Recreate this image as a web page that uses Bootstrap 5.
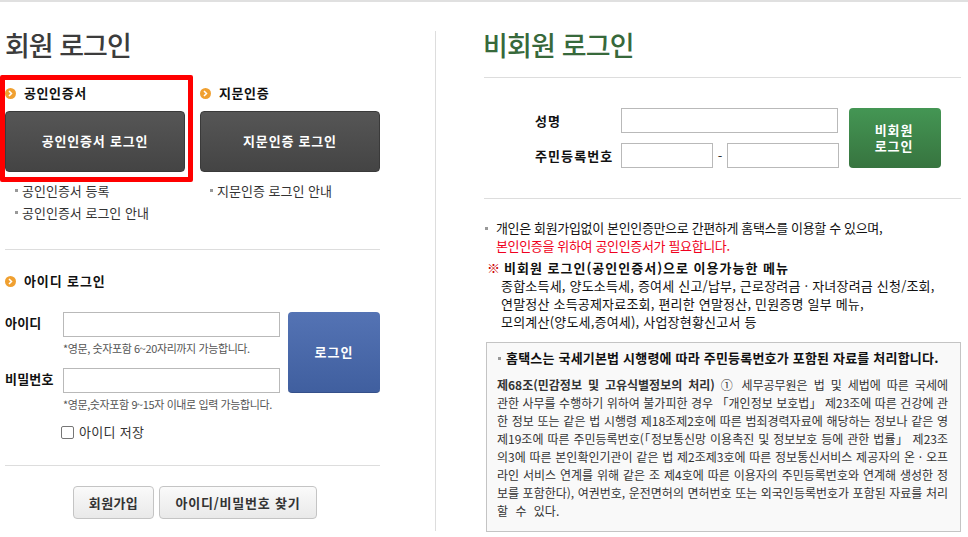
<!DOCTYPE html>
<html lang="ko">
<head>
    <meta charset="UTF-8">
    <meta name="viewport" content="width=device-width, initial-scale=1.0">
    <title>로그인</title>
    <link href="https://cdn.jsdelivr.net/npm/bootstrap@5.3.0/dist/css/bootstrap.min.css" rel="stylesheet">
    <script src="https://cdn.jsdelivr.net/npm/bootstrap@5.3.0/dist/js/bootstrap.bundle.min.js"></script>
    <style>
        body {
            font-family: "Noto Sans CJK KR", "Liberation Sans", sans-serif;
            font-size: 13px;
            line-height: 18px;
            color: #333;
            background: #fff;
            overflow: hidden;
        }
        .page-wrap { border-top: 2px solid #e0e0e0; height: 537px; position: relative; }
        .left-col { width: 375px; margin-left: 5px; padding-top: 25px; }
        .right-col { width: 477px; margin-left: 48px; padding-top: 25px; }
        .divider { width: 1px; background: #ddd; height: 500px; margin: 29px 0 0 55px; }
        .page-title { font-size: 27px; line-height: 36px; font-weight: 500; letter-spacing: -1px; color: #3c3c3c; margin: 0; }
        .title-green { color: #37693b; margin-left: -1px; letter-spacing: -.85px; }
        .sec-title { font-weight: 700; color: #111; line-height: 14px; letter-spacing: .6px; gap: 8px; }
        .dot { width: 11px; height: 11px; flex: none; display: block; }
        .red-box { position: absolute; left: 0; top: 73px; width: 193px; height: 107px; border: 5px solid #f00; border-radius: 2px; }
        .cert-row { margin-top: 23px; gap: 15px; }
        .cert-col { width: 180px; }
        .dark-btn {
            height: 61px; width: 180px; margin-top: 11px; border: 1px solid #3a3a3a; border-radius: 4px; display: block; padding-bottom: 3px;
            background: linear-gradient(#565656, #444); color: #fff; font-weight: 700; letter-spacing: .8px;
        }
        .bullets { list-style: none; padding: 0; margin: 8px 0 0 10px; color: #333; }
        .bullets li { line-height: 22px; padding-left: 7px; position: relative; }
        .bullets li::before { content: ""; position: absolute; left: 0; top: 9px; width: 3px; height: 3px; background: #999; }
        .rule { border-top: 1px solid #ddd; }
        .rule-cert { margin-top: 25px; }
        .sec-id { margin-top: 24px; letter-spacing: .9px; }
        .id-form { margin-top: 24px; }
        .txt-input { width: 100%; height: 25px; border: 1px solid #b9b9b9; background: #fff; display: block; outline: 0; }
        .id-label { width: 58px; font-weight: 700; color: #111; line-height: 22px; letter-spacing: .2px; flex: none; }
        .id-fields { width: 217px; flex: none; }
        .hint { font-size: 11px; line-height: 14px; color: #555; letter-spacing: -.4px; margin: 4px 0 13px; white-space: nowrap; }
        .blue-btn {
            width: 92px; height: 81px; border: 0; border-bottom: 1px solid #35508a; border-radius: 4px; margin-left: 8px;
            background: linear-gradient(#5473b4, #405f9f); color: #fff; font-weight: 700; letter-spacing: 1px;
        }
        .save-row { padding-left: 56px; gap: 5px; line-height: 16px; color: #333; letter-spacing: .3px; }
        .save-check { width: 13px; height: 13px; border: 1px solid #767676; border-radius: 2px; flex: none; margin: 0; appearance: none; background: #fff; }
        .rule-save { margin-top: 25px; }
        .btn-row { margin-top: 20px; padding-left: 5px; gap: 5px; }
        .gray-btn {
            height: 33px; border: 1px solid #c4c4c4; border-radius: 4px; background: linear-gradient(#fafafa, #e9e9e9);
            color: #333; font-weight: 700; letter-spacing: .4px; padding: 0;
        }
        .gray-join { width: 81px; }
        .gray-find { width: 158px; letter-spacing: .8px; }
        .rule-title { margin-top: 14px; }
        .guest-form { margin-top: 30px; }
        .guest-row { margin-bottom: 10px; }
        .guest-row:last-child { margin-bottom: 0; }
        .nm-label { width: 137px; padding-left: 51px; font-weight: 700; color: #111; line-height: 25px; letter-spacing: 1.1px; flex: none; white-space: nowrap; }
        .in-name { width: 217px; }
        .in-front { width: 92px; }
        .in-back { width: 112px; }
        .dash { width: 14px; text-align: center; color: #333; }
        .green-btn {
            width: 92px; height: 60px; border: 0; border-radius: 4px; background: linear-gradient(#449654, #37743f); margin-left: 10px;
            color: #fff; font-weight: 700; letter-spacing: .8px; padding-left: 4px;
        }
        .green-line { display: block; height: 16px; line-height: 16px; }
        .rule-guest { margin-top: 30px; }
        .notice { color: #111; margin-top: 20px; }
        .notice-line { padding-left: 12px; letter-spacing: -.35px; position: relative; white-space: nowrap; }
        .notice-bullet::before { content: ""; position: absolute; left: 1px; top: 8px; width: 3px; height: 3px; background: #999; }
        .notice-red { color: #f00020; }
        .menu-title { font-weight: 700; color: #111; letter-spacing: 1px; margin-top: 4px; padding-left: 3px; white-space: nowrap; }
        .ref-mark { color: #c00; font-weight: 700; margin-right: 3px; }
        .menu-line { padding-left: 17px; letter-spacing: .2px; white-space: nowrap; }
        .legal-box { width: 475px; height: 190px; margin: 11px 0 0 2px; padding: 6px 12px 0 10px; border: 1px solid #c4c4c4; background: #f9f9f9; color: #333; }
        .legal-head { font-weight: 700; color: #111; letter-spacing: .2px; padding-left: 9px; position: relative; white-space: nowrap; }
        .legal-head::before { content: ""; position: absolute; left: 1px; top: 8px; width: 3px; height: 3px; background: #999; }
        .legal-body { margin: 9px 0 0; font-size: 12px; line-height: 18px; }
        .legal-line { text-align: justify; text-align-last: justify; white-space: nowrap; }
        .legal-end { text-align-last: left; word-spacing: 4px; }
    </style>
</head>
<body>
    <div class="page-wrap d-flex">
        <div class="left-col">
            <h2 class="page-title">회원 로그인</h2>
            <div class="d-flex cert-row">
                <div class="cert-col">
                    <div class="sec-title d-flex align-items-center">
                        <svg class="dot" viewBox="0 0 11 11"><circle cx="5.5" cy="5.5" r="5.5" fill="#f0a030"/><path d="M4 3l2.5 2.5L4 8" fill="none" stroke="#fff" stroke-width="1.5"/></svg>공인인증서
                    </div>
                    <button class="dark-btn" type="button">공인인증서 로그인</button>
                    <ul class="bullets">
                        <li>공인인증서 등록</li>
                        <li>공인인증서 로그인 안내</li>
                    </ul>
                </div>
                <div class="cert-col">
                    <div class="sec-title d-flex align-items-center">
                        <svg class="dot" viewBox="0 0 11 11"><circle cx="5.5" cy="5.5" r="5.5" fill="#f0a030"/><path d="M4 3l2.5 2.5L4 8" fill="none" stroke="#fff" stroke-width="1.5"/></svg>지문인증
                    </div>
                    <button class="dark-btn" type="button">지문인증 로그인</button>
                    <ul class="bullets">
                        <li>지문인증 로그인 안내</li>
                    </ul>
                </div>
            </div>
            <div class="rule rule-cert"></div>
            <div class="sec-title sec-id d-flex align-items-center">
                <svg class="dot" viewBox="0 0 11 11"><circle cx="5.5" cy="5.5" r="5.5" fill="#f0a030"/><path d="M4 3l2.5 2.5L4 8" fill="none" stroke="#fff" stroke-width="1.5"/></svg>아이디 로그인
            </div>
            <div class="d-flex id-form">
                <div>
                    <div class="d-flex">
                        <div class="id-label">아이디</div>
                        <div class="id-fields">
                            <input class="txt-input" type="text">
                            <div class="hint">*영문, 숫자포함 6~20자리까지 가능합니다.</div>
                        </div>
                    </div>
                    <div class="d-flex">
                        <div class="id-label">비밀번호</div>
                        <div class="id-fields">
                            <input class="txt-input" type="text">
                            <div class="hint">*영문,숫자포함 9~15자 이내로 입력 가능합니다.</div>
                        </div>
                    </div>
                </div>
                <button class="blue-btn" type="button">로그인</button>
            </div>
            <label class="save-row d-flex align-items-center">
                <input class="save-check" type="checkbox"> 아이디 저장
            </label>
            <div class="rule rule-save"></div>
            <div class="btn-row d-flex justify-content-center">
                <button class="gray-btn gray-join" type="button">회원가입</button>
                <button class="gray-btn gray-find" type="button">아이디/비밀번호 찾기</button>
            </div>
        </div>
        <div class="divider"></div>
        <div class="right-col">
            <h2 class="page-title title-green">비회원 로그인</h2>
            <div class="rule rule-title"></div>
            <div class="d-flex guest-form">
                <div>
                    <div class="d-flex guest-row">
                        <div class="nm-label">성명</div>
                        <input class="txt-input in-name" type="text">
                    </div>
                    <div class="d-flex guest-row align-items-center">
                        <div class="nm-label">주민등록번호</div>
                        <input class="txt-input in-front" type="text">
                        <span class="dash">-</span>
                        <input class="txt-input in-back" type="text">
                    </div>
                </div>
                <button class="green-btn" type="button"><span class="green-line">비회원</span><span class="green-line">로그인</span></button>
            </div>
            <div class="rule rule-guest"></div>
            <div class="notice">
                <div class="notice-line notice-bullet">개인은 회원가입없이 본인인증만으로 간편하게 홈택스를 이용할 수 있으며,</div>
                <div class="notice-line notice-red">본인인증을 위하여 공인인증서가 필요합니다.</div>
                <div class="menu-title"><span class="ref-mark">※</span>비회원 로그인(공인인증서)으로 이용가능한 메뉴</div>
                <div class="menu-line">종합소득세, 양도소득세, 증여세 신고/납부, 근로장려금 · 자녀장려금 신청/조회,</div>
                <div class="menu-line">연말정산 소득공제자료조회, 편리한 연말정산, 민원증명 일부 메뉴,</div>
                <div class="menu-line">모의계산(양도세,증여세), 사업장현황신고서 등</div>
            </div>
            <div class="legal-box">
                <div class="legal-head">홈택스는 국세기본법 시행령에 따라 주민등록번호가 포함된 자료를 처리합니다.</div>
                <div class="legal-body">
                    <div class="legal-line"><b>제68조(민감정보 및 고유식별정보의 처리)</b> ① 세무공무원은 법 및 세법에 따른 국세에</div>
                    <div class="legal-line">관한 사무를 수행하기 위하여 불가피한 경우 「개인정보 보호법」 제23조에 따른 건강에 관</div>
                    <div class="legal-line">한 정보 또는 같은 법 시행령 제18조제2호에 따른 범죄경력자료에 해당하는 정보나 같은 영</div>
                    <div class="legal-line">제19조에 따른 주민등록번호(「정보통신망 이용촉진 및 정보보호 등에 관한 법률」 제23조</div>
                    <div class="legal-line">의3에 따른 본인확인기관이 같은 법 제2조제3호에 따른 정보통신서비스 제공자의 온 · 오프</div>
                    <div class="legal-line">라인 서비스 연계를 위해 같은 조 제4호에 따른 이용자의 주민등록번호와 연계해 생성한 정</div>
                    <div class="legal-line">보를 포함한다), 여권번호, 운전면허의 면허번호 또는 외국인등록번호가 포함된 자료를 처리</div>
                    <div class="legal-line legal-end">할 수 있다.</div>
                </div>
            </div>
        </div>
        <div class="red-box"></div>
    </div>
</body>
</html>
